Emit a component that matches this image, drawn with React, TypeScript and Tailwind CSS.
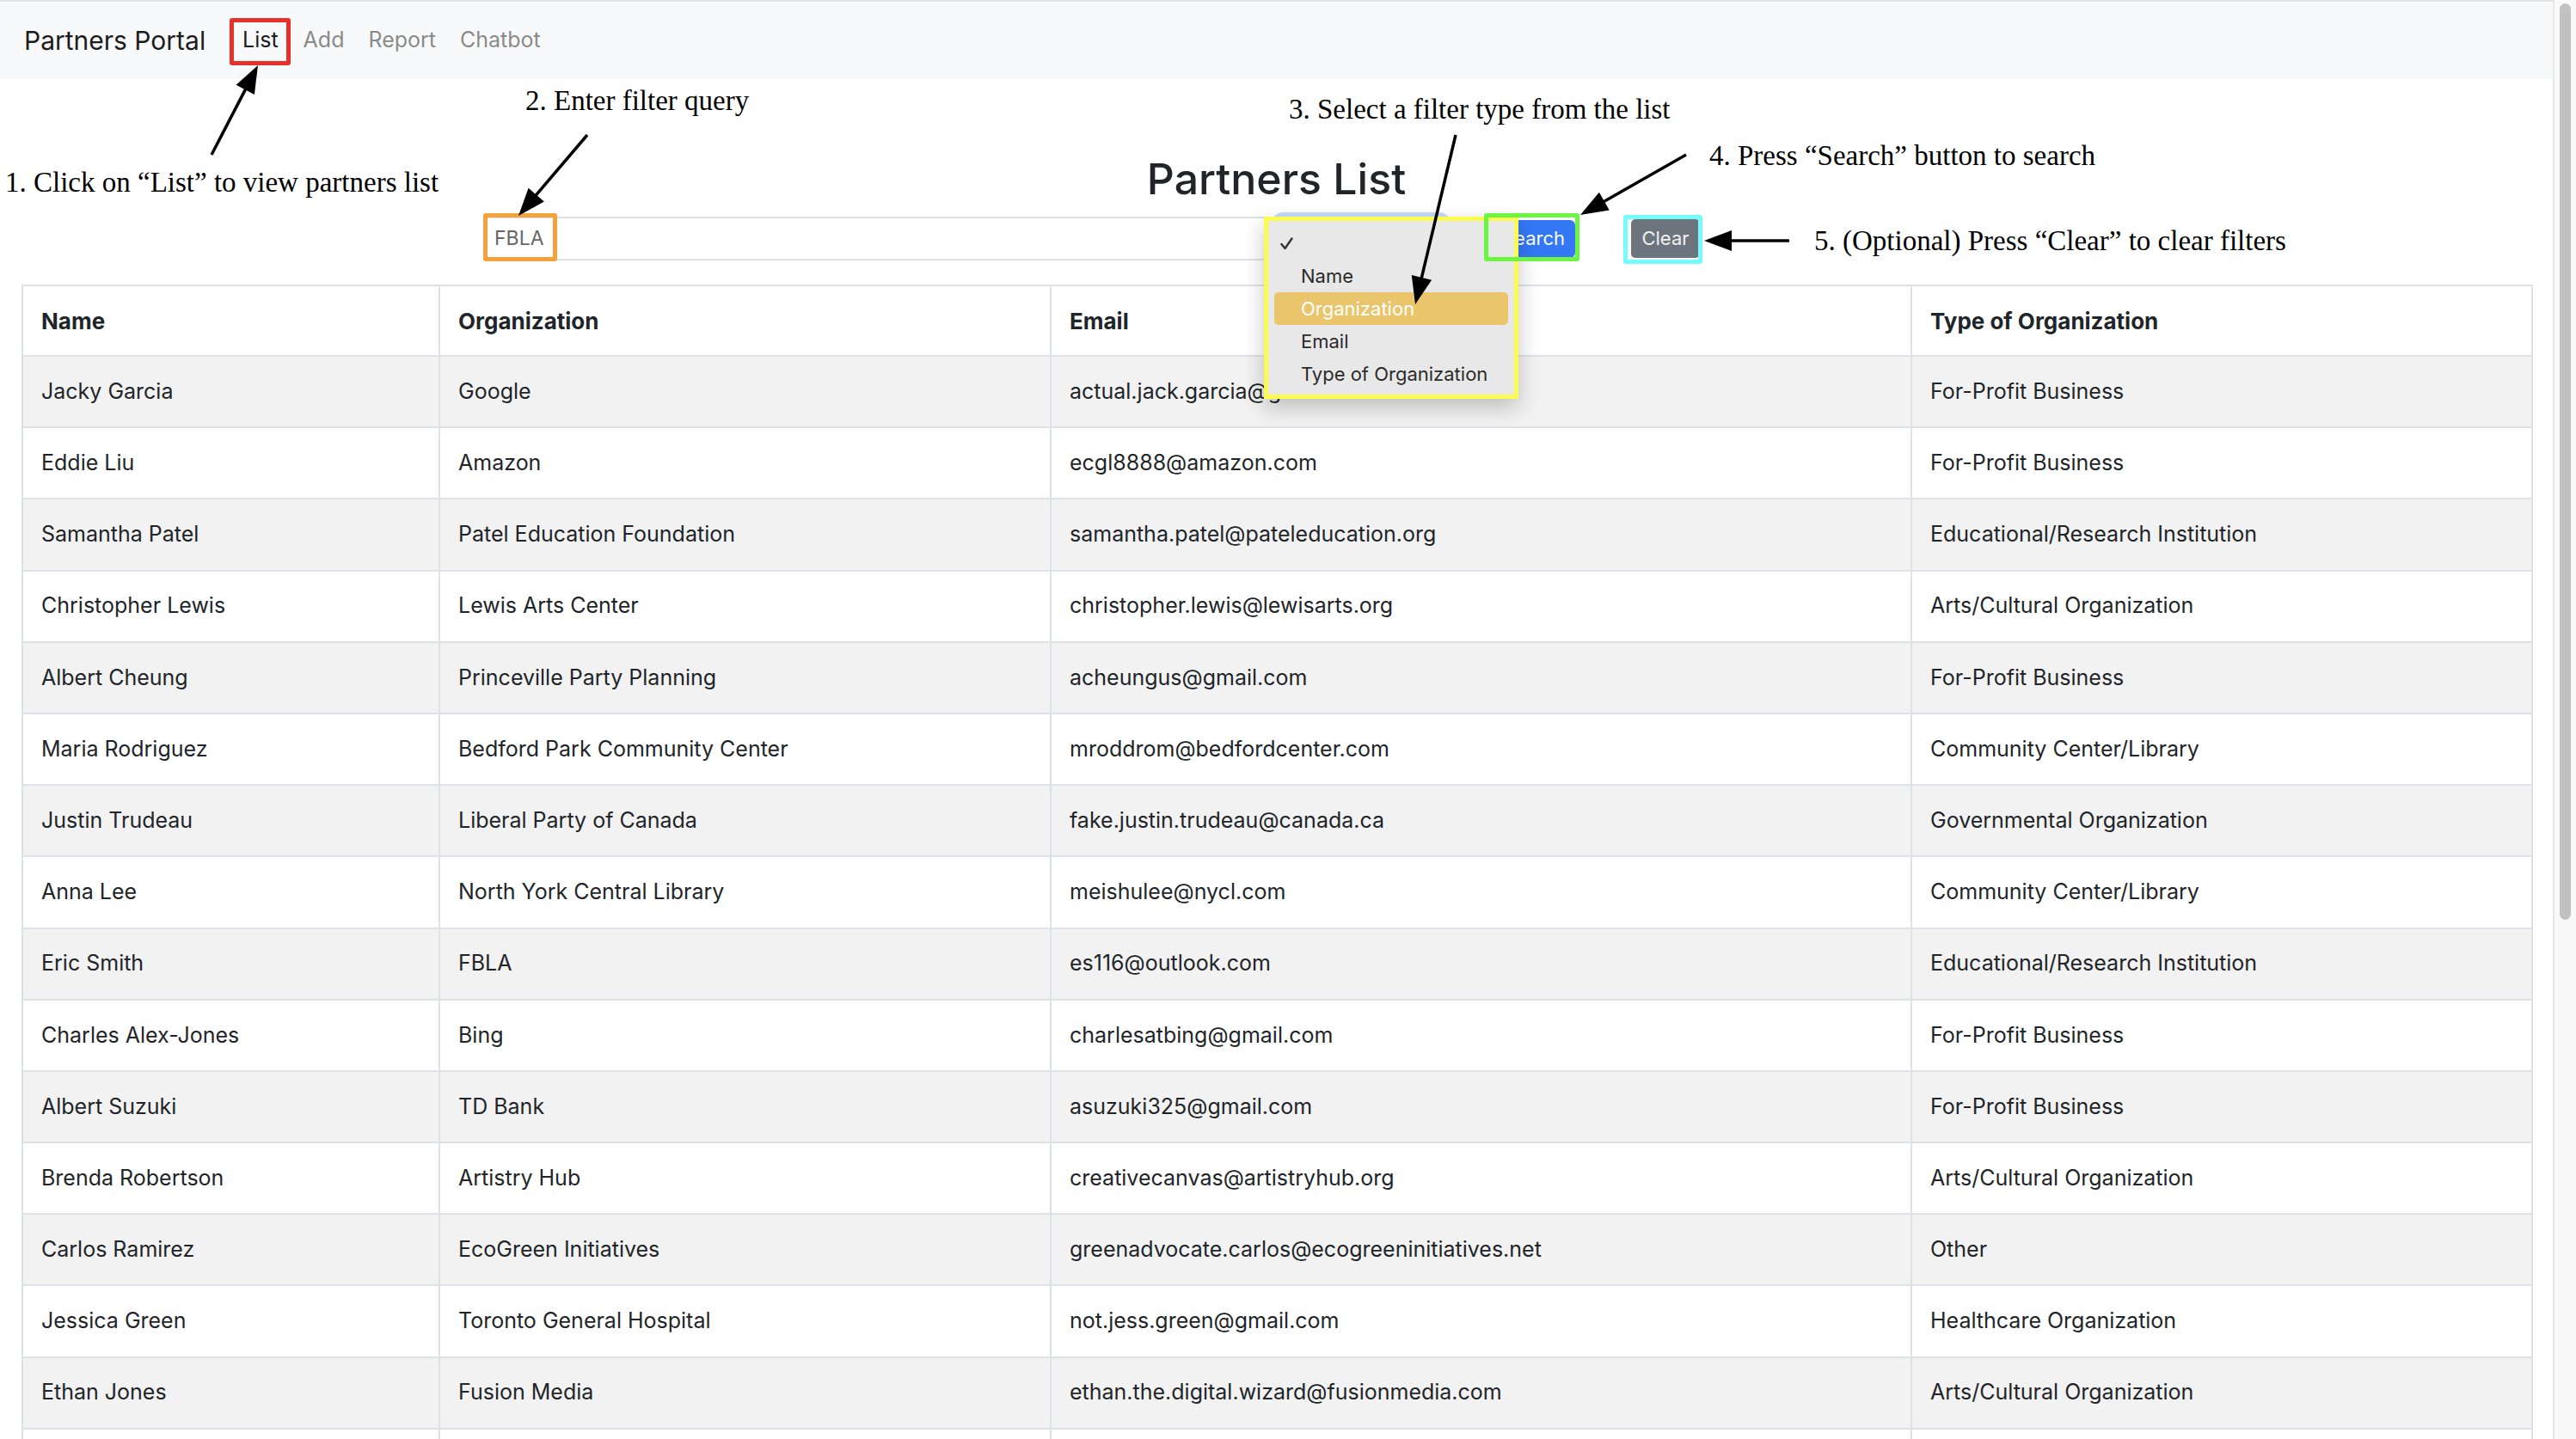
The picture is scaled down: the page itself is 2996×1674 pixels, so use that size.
import React from "react";

interface Partner {
  name: string;
  org: string;
  email: string;
  type: string;
}

const partners: Partner[] = [
  { name: "Jacky Garcia", org: "Google", email: "actual.jack.garcia@gmail.com", type: "For-Profit Business" },
  { name: "Eddie Liu", org: "Amazon", email: "ecgl8888@amazon.com", type: "For-Profit Business" },
  { name: "Samantha Patel", org: "Patel Education Foundation", email: "samantha.patel@pateleducation.org", type: "Educational/Research Institution" },
  { name: "Christopher Lewis", org: "Lewis Arts Center", email: "christopher.lewis@lewisarts.org", type: "Arts/Cultural Organization" },
  { name: "Albert Cheung", org: "Princeville Party Planning", email: "acheungus@gmail.com", type: "For-Profit Business" },
  { name: "Maria Rodriguez", org: "Bedford Park Community Center", email: "mroddrom@bedfordcenter.com", type: "Community Center/Library" },
  { name: "Justin Trudeau", org: "Liberal Party of Canada", email: "fake.justin.trudeau@canada.ca", type: "Governmental Organization" },
  { name: "Anna Lee", org: "North York Central Library", email: "meishulee@nycl.com", type: "Community Center/Library" },
  { name: "Eric Smith", org: "FBLA", email: "es116@outlook.com", type: "Educational/Research Institution" },
  { name: "Charles Alex-Jones", org: "Bing", email: "charlesatbing@gmail.com", type: "For-Profit Business" },
  { name: "Albert Suzuki", org: "TD Bank", email: "asuzuki325@gmail.com", type: "For-Profit Business" },
  { name: "Brenda Robertson", org: "Artistry Hub", email: "creativecanvas@artistryhub.org", type: "Arts/Cultural Organization" },
  { name: "Carlos Ramirez", org: "EcoGreen Initiatives", email: "greenadvocate.carlos@ecogreeninitiatives.net", type: "Other" },
  { name: "Jessica Green", org: "Toronto General Hospital", email: "not.jess.green@gmail.com", type: "Healthcare Organization" },
  { name: "Ethan Jones", org: "Fusion Media", email: "ethan.the.digital.wizard@fusionmedia.com", type: "Arts/Cultural Organization" },
  { name: "", org: "", email: "", type: "" },
];

const filterTypes = ["Name", "Organization", "Email", "Type of Organization"];

// annotation arrow: line + filled head at (x2, y2)
function Arrow({ x1, y1, x2, y2 }: { x1: number; y1: number; x2: number; y2: number }) {
  const dx = x2 - x1;
  const dy = y2 - y1;
  const len = Math.hypot(dx, dy);
  const ux = dx / len;
  const uy = dy / len;
  const L = 32;
  const W = 12;
  const bx = x2 - ux * L;
  const by = y2 - uy * L;
  const pts = `${x2},${y2} ${bx - uy * W},${by + ux * W} ${bx + uy * W},${by - ux * W}`;
  return (
    <g>
      <line x1={x1} y1={y1} x2={bx + ux * 2} y2={by + uy * 2} stroke="black" strokeWidth={3.5} />
      <polygon points={pts} fill="black" />
    </g>
  );
}

export default function App() {
  return (
    <div className="flex h-[1674px] w-[2996px] overflow-hidden bg-white font-['Inter',sans-serif] text-[#212529]">
      {/* page */}
      <div className="relative flex min-w-0 flex-1 flex-col overflow-hidden">
        {/* navbar */}
        <nav className="flex h-[92px] shrink-0 items-center border-t-2 border-[#e4e4e4] bg-[#f8f9fa] pl-[28px]">
          <span className="w-[239px] shrink-0 text-[30px] text-[#1c1c1c]">Partners Portal</span>
          <span className="px-[15px] text-[25px] text-[#1c1c1c]">List</span>
          <span className="px-[14px] text-[25px] text-[#8a8a8a]">Add</span>
          <span className="px-[14px] text-[25px] text-[#8a8a8a]">Report</span>
          <span className="px-[14px] text-[25px] text-[#8a8a8a]">Chatbot</span>
        </nav>

        <div className="flex shrink-0 flex-col px-[25px]">
          <h2 className="mt-[86px] h-[60px] shrink-0 text-center text-[50px] font-medium leading-[60px] text-[#212529]">
            Partners List
          </h2>

          {/* search row */}
          <div className="mt-[14px] ml-[537px] flex h-[51px] shrink-0 items-center">
            <div className="flex h-[51px] w-[916px] items-center rounded-[8px] border-2 border-[#dee2e6] bg-white px-[11px] text-[23px] text-[#666]">
              FBLA
            </div>
            <div className="ml-[6px] h-[51px] w-[198px] rounded-[8px] border-2 border-[#86b7fe] bg-white ring-[5px] ring-[#c5dafc]" />
            <button className="ml-[53px] h-[44px] w-[97px] rounded-[6px] bg-[#3478f6] text-[22px] text-white">
              Search
            </button>
            <button className="ml-[65px] h-[45px] w-[80px] rounded-[5px] bg-[#6c757d] text-[22px] text-[#f0f0f0]">
              Clear
            </button>
          </div>

          {/* table */}
          <table className="mt-[28px] w-full shrink-0 table-fixed border-collapse text-[25px] text-[#212529]">
            <colgroup>
              <col className="w-[485px]" />
              <col className="w-[711px]" />
              <col className="w-[1001px]" />
              <col className="w-[722px]" />
            </colgroup>
            <thead>
              <tr className="h-[82px] bg-white">
                {["Name", "Organization", "Email", "Type of Organization"].map((h) => (
                  <th key={h} className="border-2 border-[#dee2e6] px-[21px] text-left text-[26px] font-bold">
                    {h}
                  </th>
                ))}
              </tr>
            </thead>
            <tbody>
              {partners.map((p, i) => (
                <tr key={i} className={i % 2 === 0 ? "h-[83.2px] bg-[#f2f2f2]" : "h-[83.2px] bg-white"}>
                  <td className="border-2 border-[#dee2e6] px-[21px] whitespace-nowrap">{p.name}</td>
                  <td className="border-2 border-[#dee2e6] px-[21px] whitespace-nowrap">{p.org}</td>
                  <td className="border-2 border-[#dee2e6] px-[21px] whitespace-nowrap">{p.email}</td>
                  <td className="border-2 border-[#dee2e6] px-[21px] whitespace-nowrap">{p.type}</td>
                </tr>
              ))}
            </tbody>
          </table>
        </div>

        {/* open select menu */}
        <div className="absolute left-[1470px] top-[252px] flex h-[212px] w-[296px] flex-col border-[5px] border-[#fbfb50] bg-[#e8e8e8] pt-[7px] text-[22px] text-[#2b2b2b] shadow-[0_10px_24px_rgba(0,0,0,0.22)]">
          <div className="flex h-[38px] shrink-0 items-center pl-[14px]">
            <svg width="15" height="15" viewBox="0 0 15 15">
              <path d="M1.5 8 L5.5 13 L13.5 1.5" fill="none" stroke="#333" strokeWidth="2.4" strokeLinecap="round" strokeLinejoin="round" />
            </svg>
          </div>
          {filterTypes.map((f) => (
            <div
              key={f}
              className={
                f === "Organization"
                  ? "mx-[7px] flex h-[38px] shrink-0 items-center rounded-[5px] bg-[#ebc56b] pl-[31px] text-white"
                  : "mx-[7px] flex h-[38px] shrink-0 items-center pl-[31px]"
              }
            >
              {f}
            </div>
          ))}
        </div>

        {/* highlight boxes */}
        <div className="absolute left-[267px] top-[21px] h-[55px] w-[71px] rounded-[3px] border-[5px] border-[#e8302a]" />
        <div className="absolute left-[562px] top-[248px] h-[56px] w-[86px] rounded-[3px] border-[5px] border-[#f4a23c]" />
        <div className="absolute left-[1726px] top-[248px] h-[56px] w-[111px] rounded-[3px] border-[5px] border-[#6cf542]" />
        <div className="absolute left-[1888px] top-[250px] h-[57px] w-[92px] rounded-[3px] border-[5px] border-[#74fbfb]" />

        {/* annotation texts */}
        <div className="absolute inset-0 font-['Liberation_Serif',serif] text-[33px] leading-none text-black">
          <span className="absolute left-[6px] top-[196px] whitespace-nowrap">1. Click on “List” to view partners list</span>
          <span className="absolute left-[611px] top-[101px] whitespace-nowrap">2. Enter filter query</span>
          <span className="absolute left-[1499px] top-[111px] whitespace-nowrap">3. Select a filter type from the list</span>
          <span className="absolute left-[1988px] top-[165px] whitespace-nowrap">4. Press “Search” button to search</span>
          <span className="absolute left-[2110px] top-[264px] whitespace-nowrap">5. (Optional) Press “Clear” to clear filters</span>
        </div>

        {/* arrows */}
        <svg className="pointer-events-none absolute left-0 top-0" width="2969" height="1674">
          <Arrow x1={246} y1={180} x2={300} y2={76} />
          <Arrow x1={683} y1={157} x2={603} y2={251} />
          <Arrow x1={1693} y1={157} x2={1646} y2={354} />
          <Arrow x1={1961} y1={180} x2={1838} y2={250} />
          <Arrow x1={2081} y1={280} x2={1982} y2={280} />
        </svg>
      </div>

      {/* scrollbar */}
      <div className="flex w-[27px] shrink-0 flex-col border-l-2 border-[#e8e8e8] bg-[#f9f9f9] pt-[4px]">
        <div className="ml-[6px] h-[1066px] w-[13px] shrink-0 rounded-full bg-[#c1c1c1]" />
      </div>
    </div>
  );
}
